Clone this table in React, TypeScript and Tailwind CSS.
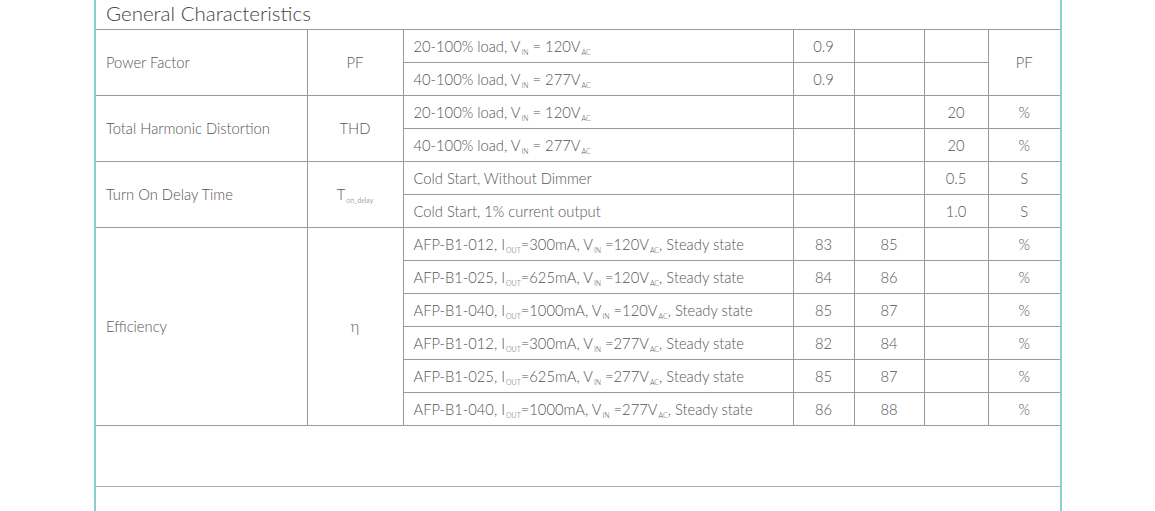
import type { ReactNode } from "react"

type Row = {
  cond: ReactNode
  min?: string
  typ?: string
  max?: string
  unit?: string
}

const Sub = ({ children }: { children: ReactNode }) => (
  <sub className="text-[7px] align-baseline relative top-[3px] ml-[1px]">{children}</sub>
)

const vin = (v: string) => (
  <>
    V<Sub>IN</Sub> = {v}V<Sub>AC</Sub>
  </>
)

const eff = (model: string, iout: string, v: string) => (
  <>
    {model}, I<Sub>OUT</Sub>={iout}, V<Sub>IN</Sub> ={v}V<Sub>AC</Sub>, Steady state
  </>
)

const groups: { name: string; symbol: ReactNode; rows: Row[]; unitSpan?: string }[] = [
  {
    name: "Power Factor",
    symbol: "PF",
    unitSpan: "PF",
    rows: [
      { cond: <>20-100% load, {vin("120")}</>, min: "0.9" },
      { cond: <>40-100% load, {vin("277")}</>, min: "0.9" },
    ],
  },
  {
    name: "Total Harmonic Distortion",
    symbol: "THD",
    rows: [
      { cond: <>20-100% load, {vin("120")}</>, max: "20", unit: "%" },
      { cond: <>40-100% load, {vin("277")}</>, max: "20", unit: "%" },
    ],
  },
  {
    name: "Turn On Delay Time",
    symbol: (
      <>
        T<Sub>on_delay</Sub>
      </>
    ),
    rows: [
      { cond: "Cold Start, Without Dimmer", max: "0.5", unit: "S" },
      { cond: "Cold Start, 1% current output", max: "1.0", unit: "S" },
    ],
  },
  {
    name: "Efficiency",
    symbol: "η",
    rows: [
      { cond: eff("AFP-B1-012", "300mA", "120"), min: "83", typ: "85", unit: "%" },
      { cond: eff("AFP-B1-025", "625mA", "120"), min: "84", typ: "86", unit: "%" },
      { cond: eff("AFP-B1-040", "1000mA", "120"), min: "85", typ: "87", unit: "%" },
      { cond: eff("AFP-B1-012", "300mA", "277"), min: "82", typ: "84", unit: "%" },
      { cond: eff("AFP-B1-025", "625mA", "277"), min: "85", typ: "87", unit: "%" },
      { cond: eff("AFP-B1-040", "1000mA", "277"), min: "86", typ: "88", unit: "%" },
    ],
  },
]

const td = "h-[33px] border border-[#9a9a9a] p-0"

export default function App() {
  return (
    <div className="min-h-[511px] bg-white" style={{ fontFamily: "Lato, 'Open Sans', sans-serif" }}>
      <div className="ml-[94px] w-[968px] border-x-2 border-[#86d0d0] text-[#555] font-light">
        {/* Title */}
        <div className="h-[29px] pl-[10px] text-[20.5px] leading-[20px] pt-[3px] text-[#444] font-light">
          General Characteristics
        </div>

        <table className="w-full table-fixed border-collapse text-[14.75px]">
          <colgroup>
            <col className="w-[211px]" />
            <col className="w-[96px]" />
            <col className="w-[390px]" />
            <col className="w-[61px]" />
            <col className="w-[70px]" />
            <col className="w-[64px]" />
            <col />
          </colgroup>
          <tbody>
            {groups.map((g) =>
              g.rows.map((r, i) => (
                <tr key={g.name + i}>
                  {i === 0 && (
                    <>
                      <td rowSpan={g.rows.length} className={`${td} border-l-0 pl-[10px]`}>
                        {g.name}
                      </td>
                      <td rowSpan={g.rows.length} className={`${td} text-center`}>
                        {g.symbol}
                      </td>
                    </>
                  )}
                  <td className={`${td} pl-[10px] whitespace-nowrap`}>{r.cond}</td>
                  <td className={`${td} text-center`}>{r.min}</td>
                  <td className={`${td} text-center`}>{r.typ}</td>
                  <td className={`${td} text-center`}>{r.max}</td>
                  {g.unitSpan ? (
                    i === 0 && (
                      <td rowSpan={g.rows.length} className={`${td} border-r-0 text-center`}>
                        {g.unitSpan}
                      </td>
                    )
                  ) : (
                    <td className={`${td} border-r-0 text-center`}>{r.unit}</td>
                  )}
                </tr>
              )),
            )}
          </tbody>
        </table>

        {/* Empty section */}
        <div className="h-[61px] border-b border-[#aaa]" />
        <div className="h-[30px]" />
      </div>
    </div>
  )
}
